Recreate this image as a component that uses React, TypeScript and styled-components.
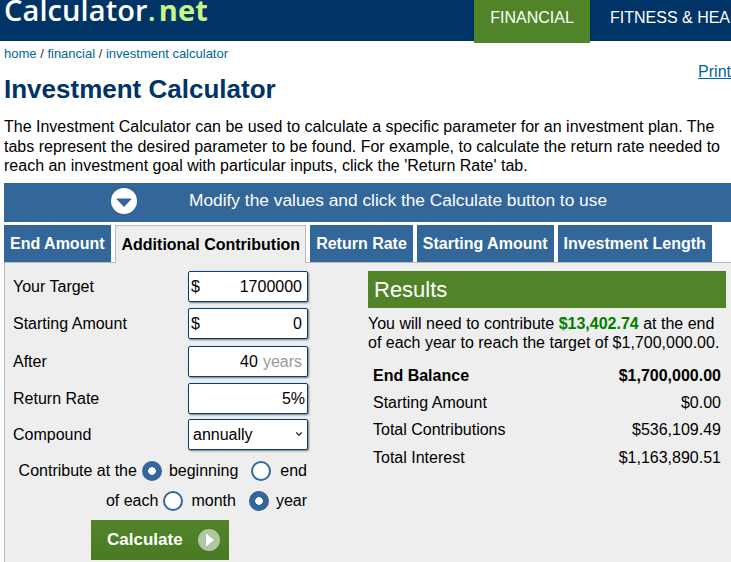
import React from "react";
import styled, { createGlobalStyle } from "styled-components";
import { ChevronDown } from "lucide-react";

const navy = "#003366";
const blue = "#336699";
const green = "#518428";

const GlobalStyle = createGlobalStyle`
  html, body {
    margin: 0;
    padding: 0;
    background: #fff;
    overflow: hidden;
  }
  * { box-sizing: border-box; }
  body {
    font-family: "Liberation Sans", Arial, sans-serif;
    color: #000;
  }
`;

const tabs = [
  { label: "End Amount", active: false },
  { label: "Additional Contribution", active: true },
  { label: "Return Rate", active: false },
  { label: "Starting Amount", active: false },
  { label: "Investment Length", active: false },
];

const results = [
  { label: "End Balance", value: "$1,700,000.00", bold: true },
  { label: "Starting Amount", value: "$0.00", bold: false },
  { label: "Total Contributions", value: "$536,109.49", bold: false },
  { label: "Total Interest", value: "$1,163,890.51", bold: false },
];

export default function App() {
  return (
    <Page>
      <GlobalStyle />
      <Header>
        <Logo>
          Calculator<LogoDot>.</LogoDot>
          <LogoNet>net</LogoNet>
        </Logo>
        <Nav>
          <NavItem $active>FINANCIAL</NavItem>
          <NavItem>FITNESS &amp; HEALTH</NavItem>
        </Nav>
      </Header>

      <Content>
        <TopRow>
          <div>
            <Crumbs>
              <a>home</a> / <a>financial</a> / <a>investment calculator</a>
            </Crumbs>
            <Title>Investment Calculator</Title>
          </div>
          <PrintLink>Print</PrintLink>
        </TopRow>

        <Intro>
          The Investment Calculator can be used to calculate a specific parameter for an investment plan. The
          tabs represent the desired parameter to be found. For example, to calculate the return rate needed to
          reach an investment goal with particular inputs, click the 'Return Rate' tab.
        </Intro>

        <Banner>
          <BannerIcon viewBox="0 0 26 26">
            <circle cx="13" cy="13" r="13" fill="#fff" />
            <path d="M5 10.5h16l-8 8.5z" fill={blue} />
          </BannerIcon>
          <span>Modify the values and click the Calculate button to use</span>
        </Banner>

        <TabBar>
          {tabs.map((tab) => (
            <Tab key={tab.label} $active={tab.active}>
              {tab.label}
            </Tab>
          ))}
        </TabBar>

        <Panel>
          <FormColumn>
            <FieldRow $after={6}>
              <FieldLabel>Your Target</FieldLabel>
              <InputBox>
                <Prefix>$</Prefix>
                <span>1700000</span>
              </InputBox>
            </FieldRow>
            <FieldRow $after={7}>
              <FieldLabel>Starting Amount</FieldLabel>
              <InputBox>
                <Prefix>$</Prefix>
                <span>0</span>
              </InputBox>
            </FieldRow>
            <FieldRow $after={6}>
              <FieldLabel>After</FieldLabel>
              <InputBox>
                <span>40</span>
                <Unit>years</Unit>
              </InputBox>
            </FieldRow>
            <FieldRow $after={5}>
              <FieldLabel>Return Rate</FieldLabel>
              <InputBox $tight>
                <span>5%</span>
              </InputBox>
            </FieldRow>
            <FieldRow $after={6}>
              <FieldLabel>Compound</FieldLabel>
              <SelectWrap>
                <SelectBox defaultValue="annually">
                  <option value="annually">annually</option>
                  <option value="monthly">monthly</option>
                </SelectBox>
                <SelectArrow size={10} strokeWidth={3} />
              </SelectWrap>
            </FieldRow>

            <RadioLine $top={5}>
              Contribute at the
              <Radio $checked $left={5} />
              <RadioText $left={7}>beginning</RadioText>
              <Radio $left={13} />
              <RadioText $left={9}>end</RadioText>
            </RadioLine>
            <RadioLine $top={10}>
              of each
              <Radio $left={5} />
              <RadioText $left={8}>month</RadioText>
              <Radio $checked $left={13} />
              <RadioText $left={7}>year</RadioText>
            </RadioLine>

            <CalcButton>
              Calculate
              <PlayIcon viewBox="0 0 22 22">
                <circle cx="11" cy="11" r="11" fill="#b0c7a3" />
                <path d="M8 4.5l8 6.5-8 6.5z" fill="#fff" />
              </PlayIcon>
            </CalcButton>
          </FormColumn>

          <ResultColumn>
            <ResultHead>Results</ResultHead>
            <Summary>
              You will need to contribute <Amount>$13,402.74</Amount> at the end of each year to reach the target of
              $1,700,000.00.
            </Summary>
            <ResultTable>
              {results.map((row) => (
                <ResultRow key={row.label} $bold={row.bold}>
                  <span>{row.label}</span>
                  <span>{row.value}</span>
                </ResultRow>
              ))}
            </ResultTable>
          </ResultColumn>
        </Panel>
      </Content>
    </Page>
  );
}

const Page = styled.div`
  width: 731px;
  height: 562px;
  overflow: hidden;
`;

const Header = styled.header`
  display: flex;
  justify-content: space-between;
  height: 41px;
  background: ${navy};
  padding-left: 4px;
`;

const Logo = styled.div`
  height: 29px;
  font-family: "Open Sans", sans-serif;
  font-size: 29px;
  font-weight: 600;
  line-height: 1;
  margin-top: -5px;
  letter-spacing: 0.1px;
  color: #fff;
  white-space: nowrap;
`;

const LogoDot = styled.span`
  color: #c8f58a;
  margin-right: 3px;
`;

const LogoNet = styled.span`
  color: #c8f58a;
  font-weight: 700;
`;

const Nav = styled.nav`
  display: flex;
  width: 257px;
  flex: none;
  white-space: nowrap;
`;

const NavItem = styled.div<{ $active?: boolean }>`
  height: 43px;
  padding: 8px 0 0;
  width: ${(p) => (p.$active ? "116px" : "auto")};
  margin-left: ${(p) => (p.$active ? "0" : "20px")};
  flex: none;
  text-align: center;
  font-size: 16px;
  line-height: 19px;
  color: #fff;
  background: ${(p) => (p.$active ? green : "transparent")};
`;

const Content = styled.main`
  padding: 0 0 0 4px;
`;

const TopRow = styled.div`
  display: flex;
  justify-content: space-between;
  align-items: flex-start;
  padding-top: 5px;
`;

const Crumbs = styled.div`
  font-size: 13px;
  line-height: 15px;
  color: #333;
  a {
    color: #006699;
  }
`;

const Title = styled.h1`
  margin: 12px 0 0;
  font-size: 26px;
  line-height: 32px;
  font-weight: 700;
  color: ${navy};
`;

const PrintLink = styled.a`
  margin-top: 16px;
  font-size: 16px;
  line-height: 19px;
  color: #006699;
  text-decoration: underline;
`;

const Intro = styled.p`
  margin: 12px 0 0;
  width: 722px;
  font-size: 16px;
  line-height: 19.5px;
`;

const Banner = styled.div`
  display: flex;
  align-items: center;
  margin-top: 7.5px;
  height: 39px;
  padding: 0 0 4px 107px;
  gap: 52px;
  background: ${blue};
  color: #fff;
  font-size: 17.33px;
`;

const BannerIcon = styled.svg`
  width: 26px;
  height: 26px;
  flex: none;
`;

const TabBar = styled.div`
  display: flex;
  gap: 4px;
  margin-top: 3px;
  height: 37px;
  align-items: flex-end;
`;

const Tab = styled.div<{ $active: boolean }>`
  height: 37px;
  padding: 0 6px;
  display: flex;
  align-items: center;
  font-size: 16px;
  font-weight: 700;
  white-space: nowrap;
  position: relative;
  color: ${(p) => (p.$active ? "#000" : "#fff")};
  background: ${(p) => (p.$active ? "#eeeeee" : blue)};
  ${(p) =>
    p.$active &&
    `
    border: 1px solid #bbb;
    border-bottom: none;
    padding: 0 5px 0 6px;
    height: 38px;
    margin-bottom: -1px;
    z-index: 1;
  `}
`;

const Panel = styled.div`
  display: flex;
  height: 300px;
  background: #eeeeee;
  border-top: 1px solid #bbb;
  border-left: 1px solid #bbb;
  padding: 8px 0 0 8px;
`;

const FormColumn = styled.div`
  width: 295px;
  flex: none;
  display: flex;
  flex-direction: column;
  font-size: 16px;
`;

const FieldRow = styled.div<{ $after: number }>`
  display: flex;
  align-items: center;
  justify-content: space-between;
  margin-bottom: ${(p) => p.$after}px;
`;

const FieldLabel = styled.span`
  font-size: 16px;
`;

const InputBox = styled.div<{ $tight?: boolean }>`
  position: relative;
  display: flex;
  align-items: center;
  justify-content: flex-end;
  gap: 5px;
  width: 120px;
  height: 31px;
  padding-right: ${(p) => (p.$tight ? "2px" : "5px")};
  background: #fff;
  border: 1px solid #004080;
  border-radius: 2px;
  box-shadow: 1px 1px 2px #777;
`;

const Prefix = styled.span`
  position: absolute;
  left: 2px;
  top: 5px;
  line-height: 19px;
`;

const Unit = styled.span`
  color: #999;
`;

const SelectWrap = styled.div`
  position: relative;
  width: 120px;
  height: 31px;
`;

const SelectBox = styled.select`
  appearance: none;
  width: 100%;
  height: 100%;
  padding: 0 0 0 4px;
  background: #fff;
  border: 1px solid #004080;
  border-radius: 2px;
  box-shadow: 1px 1px 2px #777;
  font-family: inherit;
  font-size: 16px;
  color: #000;
`;

const SelectArrow = styled(ChevronDown)`
  position: absolute;
  right: 4px;
  top: 10px;
  color: #333;
  pointer-events: none;
`;

const RadioLine = styled.div<{ $top: number }>`
  display: flex;
  align-items: center;
  justify-content: flex-end;
  height: 20px;
  padding-right: 1px;
  margin-top: ${(p) => p.$top}px;
  white-space: nowrap;
`;

const Radio = styled.span<{ $checked?: boolean; $left: number }>`
  width: 20px;
  height: 20px;
  flex: none;
  margin-left: ${(p) => p.$left}px;
  border-radius: 50%;
  border: 2px solid ${blue};
  background: ${(p) => (p.$checked ? `radial-gradient(circle, #fff 0 3.5px, ${blue} 4px)` : "#fff")};
`;

const RadioText = styled.span<{ $left: number }>`
  margin-left: ${(p) => p.$left}px;
`;

const CalcButton = styled.button`
  display: flex;
  align-items: center;
  justify-content: space-between;
  width: 138px;
  height: 40px;
  margin: 9px 0 0 78px;
  padding: 0 9px 0 16px;
  border: none;
  background: linear-gradient(#518428, #4a7a24);
  color: #fff;
  font-family: inherit;
  font-size: 17px;
  font-weight: 700;
`;

const PlayIcon = styled.svg`
  width: 22px;
  height: 22px;
  flex: none;
`;

const ResultColumn = styled.section`
  width: 358px;
  margin-left: 60px;
  flex: none;
`;

const ResultHead = styled.div`
  height: 37px;
  padding-left: 6px;
  background: ${green};
  color: #fff;
  font-size: 22px;
  line-height: 37px;
`;

const Summary = styled.p`
  margin: 6px 0 0;
  font-size: 16px;
  line-height: 19px;
`;

const Amount = styled.b`
  color: #008000;
`;

const ResultTable = styled.div`
  margin-top: 10px;
  padding: 0 5px;
`;

const ResultRow = styled.div<{ $bold: boolean }>`
  display: flex;
  justify-content: space-between;
  height: 27.4px;
  align-items: center;
  font-size: 16px;
  font-weight: ${(p) => (p.$bold ? 700 : 400)};
`;
